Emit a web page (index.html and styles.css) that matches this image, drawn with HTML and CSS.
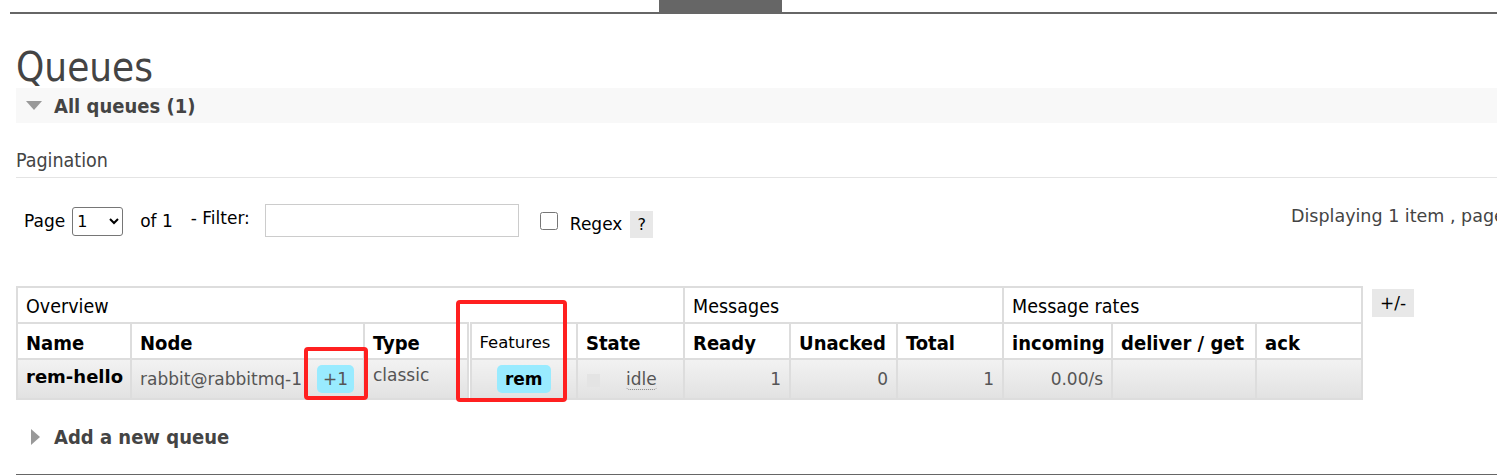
FILE: index.html
```html
<!DOCTYPE html>
<html lang="en">
<head>
  <meta charset="UTF-8" />
  <title>Queues</title>
  <link rel="stylesheet" href="styles.css">
</head>
<body>

  <div class="topbar"><span class="tab"></span></div>

  <div class="main">
    <h1>Queues</h1>

    <div class="section-head">
      <span class="tri-down"></span>
      <h2>All queues (1)</h2>
    </div>

    <div class="pagination-title">Pagination</div>

    <div class="pager">
      <div class="pager-left">
        <span>Page</span>
        <select class="page-select"><option>1</option></select>
        <span class="of">of 1</span>
        <span class="filter-label">- Filter:</span>
        <input type="text" class="filter">
        <input type="checkbox" class="regex-box">
        <span class="regex">Regex</span>
        <span class="help">?</span>
      </div>
      <div class="pager-right">Displaying 1 item , page 1 of 1</div>
    </div>

    <div class="table-wrap">
      <table class="list">
        <colgroup>
          <col style="width:114px">
          <col style="width:233px">
          <col style="width:105px">
          <col style="width:108px">
          <col style="width:107px">
          <col style="width:106px">
          <col style="width:107px">
          <col style="width:106px">
          <col style="width:109px">
          <col style="width:144px">
          <col style="width:106px">
        </colgroup>
        <thead>
          <tr class="group">
            <th colspan="5">Overview</th>
            <th colspan="3">Messages</th>
            <th colspan="3">Message rates</th>
          </tr>
          <tr class="cols">
            <th>Name</th>
            <th>Node</th>
            <th>Type</th>
            <th class="features plain">Features</th>
            <th>State</th>
            <th>Ready</th>
            <th>Unacked</th>
            <th>Total</th>
            <th>incoming</th>
            <th>deliver / get</th>
            <th>ack</th>
          </tr>
        </thead>
        <tbody>
          <tr>
            <td class="name">rem-hello</td>
            <td class="node"><span class="node-name">rabbit@rabbitmq-1</span><span class="badge">+1</span></td>
            <td class="type">classic</td>
            <td class="features center"><span class="badge bold">rem</span></td>
            <td class="state"><span class="state-box"></span><span class="idle">idle</span></td>
            <td class="num">1</td>
            <td class="num">0</td>
            <td class="num">1</td>
            <td class="num">0.00/s</td>
            <td></td>
            <td></td>
          </tr>
        </tbody>
      </table>
      <span class="toggle">+/-</span>

      <!-- annotation boxes -->
      <span class="mark mark-node"></span>
      <span class="mark mark-features"></span>
    </div>

    <div class="section-head closed">
      <span class="tri-right"></span>
      <h2>Add a new queue</h2>
    </div>
  </div>

  <div class="bottom-line"></div>

</body>
</html>
```

FILE: styles.css
```css
* {
  box-sizing: border-box;
}

body {
  margin: 0;
  font-family: "DejaVu Sans", Verdana, sans-serif;
  color: #444;
  overflow: hidden;
}

.topbar {
  margin-left: 10px;
  height: 14px;
  border-bottom: 2px solid #666;
}

.tab {
  display: block;
  margin-left: 649px;
  width: 123px;
  height: 12px;
  background: #666;
}

.main {
  padding-left: 16px;
}

h1 {
  margin: 0;
  padding-top: 31px;
  height: 74px;
  font-family: "DejaVu Sans Condensed", "Liberation Sans Narrow", sans-serif;
  font-weight: normal;
  font-size: 40px;
  line-height: 44px;
  color: #444;
}

.section-head {
  display: flex;
  align-items: center;
  height: 35px;
  background: #f8f8f8;
  padding-left: 10px;
}

.section-head h2 {
  margin: 0 0 0 12px;
  font-family: "DejaVu Sans Condensed", "Liberation Sans Narrow", sans-serif;
  font-size: 20px;
  font-weight: bold;
  color: #444;
}

.tri-down {
  width: 0;
  height: 0;
  border-left: 8px solid transparent;
  border-right: 8px solid transparent;
  border-top: 9px solid #999;
}

.tri-right {
  width: 0;
  height: 0;
  border-top: 8px solid transparent;
  border-bottom: 8px solid transparent;
  border-left: 9px solid #999;
}

.section-head.closed {
  background: none;
  margin-top: 19px;
  padding-left: 15px;
}

.section-head.closed h2 {
  margin-left: 14px;
}

.pagination-title {
  margin-top: 26px;
  padding-bottom: 5px;
  border-bottom: 1px solid #e4e4e4;
  font-family: "DejaVu Sans Condensed", "Liberation Sans Narrow", sans-serif;
  font-size: 19.5px;
  color: #444;
}

.pager {
  display: grid;
  grid-template-columns: 1275px max-content;
  align-items: center;
  margin-top: 26px;
  height: 34px;
  font-size: 17px;
  color: #000;
}

.pager-left {
  display: flex;
  align-items: center;
  padding-left: 8px;
}

.page-select {
  margin-left: 7px;
  width: 51px;
  height: 29px;
  font-family: "DejaVu Sans", sans-serif;
  font-size: 16px;
  border: 1px solid #767676;
  border-radius: 3px;
  background: #fff;
  color: #000;
}

.of {
  margin-left: 17px;
}

.filter-label {
  margin-left: 18px;
  margin-top: -6px;
}

.filter {
  margin-left: 15px;
  width: 254px;
  height: 33px;
  border: 1px solid #ccc;
  margin-top: -2px;
}

.regex-box {
  margin: 0 0 0 21px;
  width: 18px;
  height: 18px;
}

.regex {
  margin-left: 12px;
  margin-top: 6px;
}

.help {
  margin-left: 8px;
  margin-top: 6px;
  padding: 4px 7px;
  background: #e8e8e8;
  font-size: 16px;
}

.pager-right {
  white-space: nowrap;
  margin-top: -10px;
  font-size: 17.5px;
  color: #444;
}

.table-wrap {
  position: relative;
  display: flex;
  align-items: flex-start;
  margin-top: 48px;
}

table.list {
  border-collapse: collapse;
  table-layout: fixed;
  width: 1345px;
  border: 2px solid #ddd;
}

.list th,
.list td {
  border: 2px solid #ddd;
  padding: 0 8px;
  text-align: left;
  white-space: nowrap;
  overflow: hidden;
}

.list .group th {
  height: 36px;
  font-family: "DejaVu Sans Condensed", "Liberation Sans Narrow", sans-serif;
  font-weight: normal;
  font-size: 19.5px;
  color: #000;
  padding-top: 2px;
}

.list .cols th {
  height: 36px;
  font-family: "DejaVu Sans Condensed", "Liberation Sans Narrow", sans-serif;
  font-weight: bold;
  font-size: 20px;
  color: #000;
  padding-top: 3px;
}

.list .cols th.plain {
  font-family: "DejaVu Sans", sans-serif;
  font-weight: normal;
  font-size: 16.5px;
}

.list th.features,
.list td.features {
  border-left: 5px double #ddd;
}

.list tbody td {
  height: 40px;
  background: linear-gradient(#f2f2f2, #e2e2e2);
  font-size: 17px;
  color: #555;
}

.list td.name {
  font-weight: bold;
  color: #000;
  font-size: 18px;
  padding-bottom: 6px;
}

.list td.node {
  padding-right: 4px;
}

.node-name {
  display: inline-block;
  width: 173px;
  overflow: hidden;
  vertical-align: middle;
}

.badge {
  display: inline-block;
  vertical-align: middle;
  padding: 4px 6px;
  border-radius: 5px;
  background: #99ebff;
  color: #555;
  font-size: 17px;
}

.node .badge {
  margin-left: 4px;
}

.badge.bold {
  font-weight: bold;
  color: #000;
  padding: 4px 8px;
}

.list td.center {
  text-align: center;
}

.list td.type {
  vertical-align: top;
  padding-top: 5px;
}

.state-box {
  display: inline-block;
  width: 13px;
  height: 13px;
  background: #e4e4e4;
  vertical-align: middle;
  margin: 0 26px 0 1px;
}

.idle {
  border-bottom: 1px dotted #888;
  border-radius: 0 0 4px 4px;
}

.list td.num {
  text-align: right;
}

.toggle {
  margin: 3px 0 0 9px;
  padding: 4px 8px;
  background: #e8e8e8;
  color: #000;
  font-size: 17px;
}

.mark {
  position: absolute;
  border: 4px solid #ff2020;
  border-radius: 4px;
}

.mark-node {
  left: 288px;
  top: 61px;
  width: 64px;
  height: 53px;
}

.mark-features {
  left: 440px;
  top: 14px;
  width: 111px;
  height: 102px;
}

.bottom-line {
  margin: 20px 0 0 16px;
  border-top: 2px solid #666;
}
```
